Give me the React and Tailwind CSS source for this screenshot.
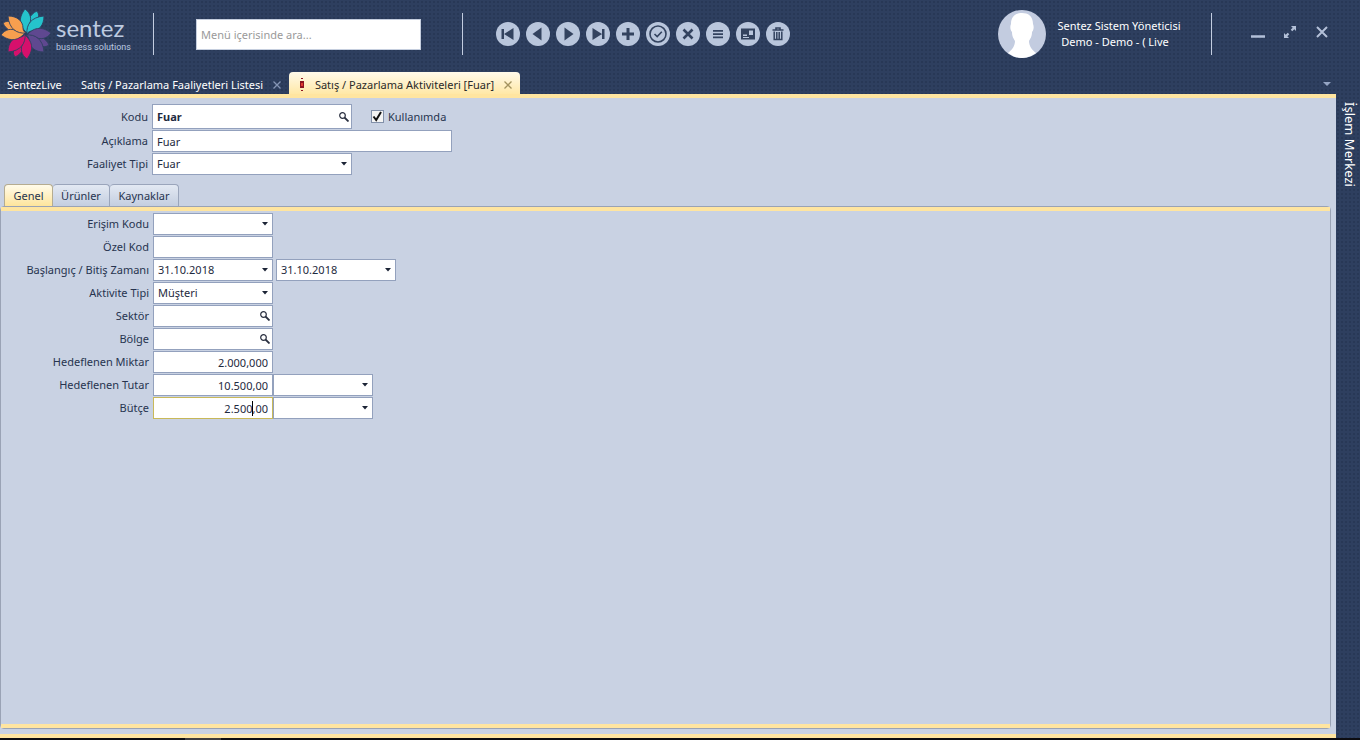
import { useState } from 'react';

const HEADER_BG =
  'bg-[#2e3f5f] bg-[radial-gradient(circle_at_center,#283856_1px,transparent_1px)] bg-[size:4px_4px]';

const boxCls =
  'w-full h-full border border-[#93a1bd] bg-white text-[#1e2a40] outline-none focus:border-[#c9b95a]';

const petals = ['#25c3cc', '#5f4890', '#d6106c', '#f79f4f'];

function Logo() {
  return (
    <a href="#home" className="flex items-center gap-1 text-[#bccae0]">
      <svg width="52" height="52" viewBox="0 0 52 52" aria-hidden="true">
        {petals.map((color, i) => (
          <g key={color} transform={`translate(26 26) rotate(${i * 90})`} fill={color} stroke="#2f4161" strokeWidth="0.9" strokeLinejoin="round">
            <path d="M1-3C0-12 4-20 11-23C13-20 13-18 12-14Z" />
            <path d="M1-1C-8-9-7-17-1-25C5-21 6-14 3-9Z" />
            <path d="M1 0C0-9 5-17 18-18C18-9 13-3 6-3C4-3 2-2 1 0Z" />
          </g>
        ))}
      </svg>
      <span className="flex flex-col gap-px">
        <span className="font-[Lato] text-[24px] leading-6">sentez</span>
        <span className="font-[Roboto] text-[9px] leading-3 whitespace-nowrap">business solutions</span>
      </span>
    </a>
  );
}

const Divider = () => <div className="h-[42px] w-px shrink-0 bg-[#c3cde0]" />;

const TOOLS = [
  { label: 'İlk kayıt', icon: <path d="M5.500 7H8v10H5.500zM8 12l9.500-6v12z" /> },
  { label: 'Önceki', icon: <path d="M6.500 12l9-6.500v13z" /> },
  { label: 'Sonraki', icon: <path d="M17.500 12l-9-6.500v13z" /> },
  { label: 'Son kayıt', icon: <path d="M6.500 6v12l9.500-6zM16 7h2.500v10H16z" /> },
  { label: 'Yeni', icon: <path d="M10.500 6h3v4.500H18v3h-4.500V18h-3v-4.500H6v-3h4.500z" /> },
  {
    label: 'Kaydet',
    icon: (
      <g fill="none" stroke="currentColor" strokeWidth="1.600">
        <circle cx="12" cy="12" r="8" />
        <path d="M8.500 12l2.700 2.600 4.600-4.800" />
      </g>
    ),
  },
  { label: 'Vazgeç', icon: <path d="M7.500 7.500l9 9M16.500 7.500l-9 9" stroke="currentColor" strokeWidth="2.600" /> },
  { label: 'Liste', icon: <path d="M7 8h10v1.800H7zM7 11.200h10V13H7zM7 14.400h10v1.800H7z" /> },
  {
    label: 'Form',
    icon: <path fillRule="evenodd" d="M5 6.500h14v11H5zM13 8.500h4v4.500h-4zM7 12.500h4V14H7zM7 15h6v1H7z" />,
  },
  {
    label: 'Sil',
    icon: (
      <g fill="none" stroke="currentColor">
        <path d="M6.500 8h11M10 7.500V6h4v1.500" strokeWidth="1.600" />
        <path d="M8.200 9.500v8h7.600v-8M10.800 10v7M13.200 10v7" strokeWidth="1.500" />
      </g>
    ),
  },
];

function Header() {
  return (
    <header className="flex h-[68px] shrink-0 items-center">
      <div className="w-[153px] shrink-0"><Logo /></div>
      <Divider />
      <input
        type="text"
        aria-label="Menü araması"
        placeholder="Menü içerisinde ara..."
        className="ml-[42px] h-[31px] w-[225px] border border-[#c5cede] bg-white px-1 text-[#333] outline-none placeholder:text-[#9a9a9a]"
      />
      <div className="ml-[41px]"><Divider /></div>
      <nav className="ml-[33px] flex gap-1.5">
        {TOOLS.map((tool) => (
          <button key={tool.label} type="button" aria-label={tool.label} className="size-6 rounded-full bg-[#b9c6dc] text-[#33435f]">
            <svg width="24" height="24" viewBox="0 0 24 24" fill="currentColor">{tool.icon}</svg>
          </button>
        ))}
      </nav>

      {/* User */}
      <div className="ml-auto flex items-center gap-2.5">
        <svg width="48" height="48" viewBox="0 0 48 48" aria-hidden="true">
          <circle cx="24" cy="24" r="24" fill="#c3cce0" />
          <path fill="#fff" d="M13 14C13 6 18 3 24 3S35 6 35 14C36 16 36 20 34 22C34 27 32 29 31 31C31 36 34 40 38 43L33 46Q24 50 15 46L10 43C14 40 17 36 17 31C16 29 14 27 14 22C12 20 12 16 13 14Z" />
        </svg>
        <div className="w-[126px] text-center whitespace-nowrap text-white">
          <div>Sentez Sistem Yöneticisi</div>
          <div className="pr-2">Demo - Demo - ( Live</div>
        </div>
      </div>
      <div className="ml-[29px]"><Divider /></div>
      <div className="mr-[30px] ml-[38px] flex gap-4 pb-1 text-[#b3c0d8]">
        <button type="button" aria-label="Simge durumuna küçült">
          <svg width="16" height="16" viewBox="0 0 16 16"><path d="M1 12.500h14" stroke="currentColor" strokeWidth="2.500" /></svg>
        </button>
        <button type="button" aria-label="Ekranı kapla">
          <svg width="16" height="16" viewBox="0 0 16 16" fill="currentColor">
            <path d="M9 2h5v5l-1.700-1.700-2 2-1.600-1.600 2-2zM2 14V9l1.700 1.700 2-2 1.600 1.600-2 2L7 14z" />
          </svg>
        </button>
        <button type="button" aria-label="Kapat">
          <svg width="16" height="16" viewBox="0 0 16 16"><path d="M3 3l10 10M13 3L3 13" stroke="currentColor" strokeWidth="2" /></svg>
        </button>
      </div>
    </header>
  );
}

function TabClose({ className }) {
  return (
    <button type="button" aria-label="Sekmeyi kapat" className={className}>
      <svg width="8" height="8" viewBox="0 0 8 8"><path d="M.5.5l7 7M7.500.5l-7 7" stroke="currentColor" strokeWidth="1.300" /></svg>
    </button>
  );
}

function DocumentTabs() {
  return (
    <div className="flex h-[26px] shrink-0 items-end text-white">
      <div className="flex h-[22px] w-[73px] items-center pt-1 pl-[7px] whitespace-nowrap">
        <button type="button">SentezLive</button>
      </div>
      <div className="flex h-[22px] w-[216px] items-center justify-between pt-1 pr-2 pl-2 whitespace-nowrap">
        <button type="button">Satış / Pazarlama Faaliyetleri Listesi</button>
        <TabClose className="text-[#8595b5]" />
      </div>
      <div className="flex h-[22px] w-[231px] items-center justify-between rounded-t-sm bg-linear-to-b from-[#fffaea] to-[#ffe8a6] pt-1 pr-2 pl-[10px] whitespace-nowrap text-[#2a2a2a]">
        <svg width="6" height="14" viewBox="0 0 6 14" aria-hidden="true">
          <path fill="#8e1420" d="M2 0h2v1H2zM1 3h4v7H1zM2 12h2v1H2z" />
          <path fill="#e03a30" d="M2 5h2v3H2z" />
        </svg>
        <button type="button">Satış / Pazarlama Aktiviteleri [Fuar]</button>
        <TabClose className="text-[#a3935f]" />
      </div>
      <button type="button" aria-label="Açık sekmeler" className="mr-[5px] mb-1.5 ml-auto text-[#95a5c4]">
        <svg width="8" height="8" viewBox="0 0 8 8"><path fill="currentColor" d="M0 2h8L4 6z" /></svg>
      </button>
    </div>
  );
}

function Row({ label, id, labelCls, children }) {
  return (
    <div className="flex items-center">
      <label htmlFor={id} className={`shrink-0 pr-1 text-right whitespace-nowrap ${labelCls}`}>{label}</label>
      {children}
    </div>
  );
}

function Combo({ id, value = '', className, label }) {
  return (
    <div className={`relative ${className}`}>
      <select id={id} aria-label={label} defaultValue={value} className={`${boxCls} appearance-none px-1`}>
        <option value={value}>{value}</option>
      </select>
      <svg width="6" height="4" viewBox="0 0 6 4" className="pointer-events-none absolute top-[9px] right-[5px]">
        <path fill="#1c2436" d="M0 0h6L3 3.500z" />
      </svg>
    </div>
  );
}

function Lookup({ id, value = '', className, inputCls = '' }) {
  return (
    <div className={`relative ${className}`}>
      <input id={id} type="text" defaultValue={value} className={`${boxCls} px-1 ${inputCls}`} />
      <button type="button" aria-label="Ara" className="absolute inset-y-0 right-[3px] flex items-center text-[#2a3040]">
        <svg width="10" height="10" viewBox="0 0 10 10" fill="none" stroke="currentColor">
          <circle cx="3.500" cy="3.500" r="2.800" strokeWidth="1.200" />
          <path d="M5.500 5.500l4 4" strokeWidth="1.800" />
        </svg>
      </button>
    </div>
  );
}

function Field({ id, value = '', className, inputCls = '' }) {
  return (
    <div className={className}>
      <input id={id} type="text" defaultValue={value} className={`${boxCls} px-1 ${inputCls}`} />
    </div>
  );
}

const PAGES = [
  { name: 'Genel', cls: 'w-[49px]' },
  { name: 'Ürünler', cls: 'w-[57px]' },
  { name: 'Kaynaklar', cls: 'w-[69px]' },
];

function DetailTabs({ active, onSelect }) {
  return (
    <div role="tablist" className="mt-[9px] flex pl-1">
      {PAGES.map((page) => (
        <button
          key={page.name}
          type="button"
          role="tab"
          aria-selected={active === page.name}
          onClick={() => onSelect(page.name)}
          className={`h-[22px] rounded-t-sm border border-b-0 whitespace-nowrap ${page.cls} ${
            active === page.name
              ? 'border-[#b5ac90] bg-linear-to-b from-[#fffbea] to-[#ffe59b]'
              : 'border-l-0 border-[#9aa5bb] bg-linear-to-b from-[#e3e9f3] via-[#d3dbe9] to-[#c4cee0]'
          }`}
        >
          {page.name}
        </button>
      ))}
    </div>
  );
}

function GeneralPage() {
  const labelCls = 'w-[152px]';
  const box = 'h-[22px] w-[120px]';
  return (
    <div className="flex flex-col gap-px pt-0.5">
      <Row label="Erişim Kodu" id="access" labelCls={labelCls}><Combo id="access" className={box} /></Row>
      <Row label="Özel Kod" id="special" labelCls={labelCls}><Field id="special" className={box} /></Row>
      <Row label="Başlangıç / Bitiş Zamanı" id="start" labelCls={labelCls}>
        <Combo id="start" value="31.10.2018" className={box} />
        <Combo label="Bitiş Zamanı" value="31.10.2018" className={`ml-[3px] ${box}`} />
      </Row>
      <Row label="Aktivite Tipi" id="activity" labelCls={labelCls}><Combo id="activity" value="Müşteri" className={box} /></Row>
      <Row label="Sektör" id="sector" labelCls={labelCls}><Lookup id="sector" className={box} /></Row>
      <Row label="Bölge" id="region" labelCls={labelCls}><Lookup id="region" className={box} /></Row>
      <Row label="Hedeflenen Miktar" id="qty" labelCls={labelCls}>
        <Field id="qty" value="2.000,000" className={box} inputCls="text-right" />
      </Row>
      <Row label="Hedeflenen Tutar" id="amount" labelCls={labelCls}>
        <Field id="amount" value="10.500,00" className={box} inputCls="text-right" />
        <Combo label="Tutar dövizi" className="h-[22px] w-[100px]" />
      </Row>
      <Row label="Bütçe" id="budget" labelCls={labelCls}>
        <div className={`relative ${box}`}>
          <input
            id="budget"
            type="text"
            defaultValue="2.500,00"
            className="h-full w-full border border-[#c9b95a] bg-white px-1 text-right text-[#1e2a40] outline-none"
          />
          {/* text cursor */}
          <span className="absolute top-1 right-5 h-[15px] w-px bg-black" />
        </div>
        <Combo label="Bütçe dövizi" className="h-[22px] w-[100px]" />
      </Row>
    </div>
  );
}

export default function App() {
  const [page, setPage] = useState('Genel');
  const labelCls = 'w-[152px]';

  return (
    <div className={`flex min-h-screen flex-col font-['Noto_Sans',sans-serif] text-[11px] leading-4 text-[#27344f] ${HEADER_BG}`}>
      <Header />
      <div className="flex grow">
        <div className="flex min-w-0 grow flex-col">
          <DocumentTabs />
          <main className="flex grow flex-col border-y-4 border-[#ffe5a0] bg-[#c9d2e3] pt-1.5 pb-[5px]">
            <div className="flex flex-col gap-px">
              <Row label="Kodu" id="code" labelCls={labelCls}>
                <Lookup id="code" value="Fuar" className="h-[25px] w-[200px]" inputCls="font-bold" />
                <label className="ml-[19px] flex items-center gap-1">
                  <input type="checkbox" defaultChecked className="peer sr-only" />
                  <span className="flex size-[13px] items-center justify-center border border-[#8290a9] bg-[#f4f4f4] *:invisible peer-checked:*:visible">
                    <svg width="11" height="11" viewBox="0 0 11 11" fill="none"><path d="M1.500 5.500l2.700 3.500L9 1" stroke="#111" strokeWidth="2" /></svg>
                  </span>
                  Kullanımda
                </label>
              </Row>
              <Row label="Açıklama" id="desc" labelCls={labelCls}><Field id="desc" value="Fuar" className="h-[22px] w-[300px]" /></Row>
              <Row label="Faaliyet Tipi" id="type" labelCls={labelCls}><Combo id="type" value="Fuar" className="h-[22px] w-[200px]" /></Row>
            </div>

            <DetailTabs active={page} onSelect={setPage} />
            <section className="mr-[5px] flex grow flex-col rounded-sm border border-[#9aa3b5]">
              <div className="grow border-y-4 border-[#ffe5a0]">
                {page === 'Genel' && <GeneralPage />}
              </div>
            </section>
          </main>
        </div>
        <aside className="w-6 shrink-0 pt-[34px] text-white">
          <button type="button" className="ml-1.5 text-[13px] [writing-mode:vertical-rl]">İşlem Merkezi</button>
        </aside>
      </div>
      <footer className="h-0.5 shrink-0 bg-[#0c0c10] pl-[185px]">
        <div className="h-full w-9 bg-[#3c3a3c]" />
      </footer>
    </div>
  );
}
